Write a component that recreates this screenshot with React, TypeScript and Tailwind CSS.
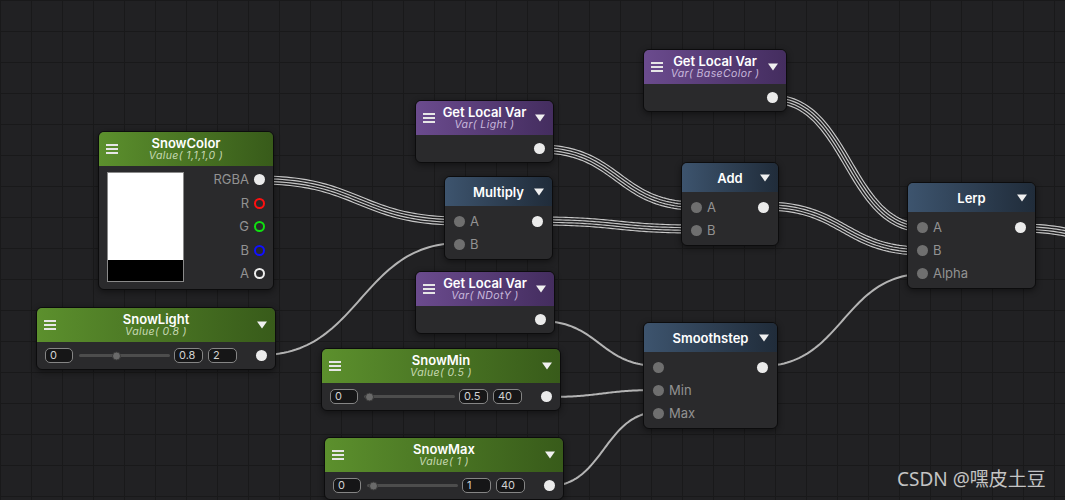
import React from "react";

type P = [number, number];

function wire(a: P, b: P, offs: number[]): string[] {
  const t = Math.max(Math.abs(b[0] - a[0]) * 0.5, 20);
  const p0 = a;
  const p1: P = [a[0] + t, a[1]];
  const p2: P = [b[0] - t, b[1]];
  const p3 = b;
  const N = 60;
  const pts: { x: number; y: number; nx: number; ny: number }[] = [];
  for (let i = 0; i <= N; i++) {
    const s = i / N;
    const u = 1 - s;
    const x = u * u * u * p0[0] + 3 * u * u * s * p1[0] + 3 * u * s * s * p2[0] + s * s * s * p3[0];
    const y = u * u * u * p0[1] + 3 * u * u * s * p1[1] + 3 * u * s * s * p2[1] + s * s * s * p3[1];
    const dx = 3 * u * u * (p1[0] - p0[0]) + 6 * u * s * (p2[0] - p1[0]) + 3 * s * s * (p3[0] - p2[0]);
    const dy = 3 * u * u * (p1[1] - p0[1]) + 6 * u * s * (p2[1] - p1[1]) + 3 * s * s * (p3[1] - p2[1]);
    const l = Math.hypot(dx, dy) || 1;
    pts.push({ x, y, nx: -dy / l, ny: dx / l });
  }
  return offs.map((o) =>
    pts
      .map((p, i) => `${i ? "L" : "M"}${(p.x + p.nx * o).toFixed(2)} ${(p.y + p.ny * o).toFixed(2)}`)
      .join(" ")
  );
}

const MULTI = [-4, -1.33, 1.33, 4];

const WIRES: { a: P; b: P; multi: boolean }[] = [
  { a: [259, 180], b: [460, 221], multi: true },
  { a: [261, 355], b: [460, 243], multi: false },
  { a: [540, 149], b: [696, 206], multi: true },
  { a: [538, 221], b: [696, 229], multi: true },
  { a: [772, 99], b: [924, 228], multi: true },
  { a: [764, 206], b: [924, 251], multi: true },
  { a: [540, 321], b: [659, 366], multi: false },
  { a: [546, 397], b: [659, 390], multi: false },
  { a: [549, 486], b: [659, 412], multi: false },
  { a: [762, 366], b: [924, 274], multi: false },
  { a: [1019, 228], b: [1170, 252], multi: true },
];

function Wires() {
  return (
    <svg className="absolute left-0 top-0" width={1065} height={500}>
      {WIRES.map((w, i) =>
        wire(w.a, w.b, w.multi ? MULTI : [0]).map((d, j) => (
          <path
            key={`${i}-${j}`}
            d={d}
            fill="none"
            stroke={w.multi ? "#c8c8c8" : "#b4b4b4"}
            strokeWidth={w.multi ? 1.15 : 2}
            strokeLinecap="round"
          />
        ))
      )}
    </svg>
  );
}

function Menu() {
  return (
    <div className="absolute left-[7px] top-1/2 flex -translate-y-1/2 flex-col gap-[2px]">
      <div className="h-[2px] w-[12px] bg-[#e6e6e6]" />
      <div className="h-[2px] w-[12px] bg-[#e6e6e6]" />
      <div className="h-[2px] w-[12px] bg-[#e6e6e6]" />
    </div>
  );
}

function Arrow() {
  return (
    <div className="absolute right-[8px] top-1/2 h-0 w-0 -translate-y-1/2 border-l-[5px] border-r-[5px] border-t-[7px] border-l-transparent border-r-transparent border-t-[#f0f0f0]" />
  );
}

function InDot() {
  return <div className="h-[11px] w-[11px] shrink-0 rounded-full bg-[#6f6f6f]" />;
}
function OutDot() {
  return <div className="h-[11px] w-[11px] shrink-0 rounded-full bg-[#ebebeb]" />;
}

type Head = "green" | "purple" | "blue";

function Node({
  pos,
  head,
  title,
  sub,
  menu,
  arrow,
  children,
}: {
  pos: string;
  head: Head;
  title: string;
  sub?: string;
  menu?: boolean;
  arrow?: boolean;
  children?: React.ReactNode;
}) {
  const headCls =
    head === "green"
      ? "bg-linear-to-r from-[#5c902d] to-[#385b1a]"
      : head === "purple"
      ? "bg-linear-to-r from-[#6b4b8e] to-[#442d5f]"
      : "bg-linear-to-r from-[#3d546e] to-[#202c3a]";
  const subCls = head === "green" ? "text-[#c6d8b2]" : "text-[#c8b8dc]";
  return (
    <div
      className={`absolute ${pos} overflow-hidden rounded-[6px] border border-[#0c0c0d] bg-[#2a2a2c] shadow-[0_2px_6px_rgba(0,0,0,0.45)]`}
    >
      <div
        className={`relative flex flex-col items-center justify-center ${sub ? "h-[34px]" : "h-[29px]"} ${headCls}`}
      >
        {menu && <Menu />}
        <div className="text-[13px] font-semibold leading-[14px] text-white">{title}</div>
        {sub && (
          <div className={`text-[10.5px] italic leading-[12px] tracking-[0.4px] ${subCls}`}>{sub}</div>
        )}
        {arrow && <Arrow />}
      </div>
      {children}
    </div>
  );
}

function OpBody({ rows }: { rows: { label?: string; inp?: boolean; out?: boolean }[] }) {
  return (
    <div className="flex flex-col px-[9px] pb-[3px] pt-[4px]">
      {rows.map((r, i) => (
        <div key={i} className="flex h-[23px] items-center">
          {r.inp && <InDot />}
          {r.label && <span className="ml-[5px] text-[13px] leading-none text-[#929292]">{r.label}</span>}
          <div className="flex-1" />
          {r.out && <OutDot />}
        </div>
      ))}
    </div>
  );
}

function VarBody() {
  return (
    <div className="flex h-[27px] items-center justify-end pr-[8px]">
      <OutDot />
    </div>
  );
}

function Box({ v, w }: { v: string; w: string }) {
  return (
    <div
      className={`flex h-[15px] ${w} items-center rounded-[5px] border-[1.5px] border-[#858585] bg-[#161617] pl-[4px] text-[11px] leading-none text-[#d2d2d2]`}
    >
      {v}
    </div>
  );
}

function SliderBody({ min, val, max, frac }: { min: string; val: string; max: string; frac: number }) {
  return (
    <div className="flex h-[27px] items-center pl-[8px] pr-[8px]">
      <Box v={min} w="w-[28px]" />
      <div className="relative ml-[6px] flex h-[15px] w-[91px] items-center">
        <div className="h-[3px] w-full rounded-full bg-[#4d4d4d]" />
        <div
          className="absolute top-1/2 h-[9px] w-[9px] -translate-y-1/2 rounded-full border border-[#3a3a3a] bg-[#6a6a6a]"
          style={{ left: `${frac * 82}px` }}
        />
      </div>
      <div className="ml-[4px]">
        <Box v={val} w="w-[29px]" />
      </div>
      <div className="ml-[5px]">
        <Box v={max} w="w-[29px]" />
      </div>
      <div className="flex-1" />
      <OutDot />
    </div>
  );
}

function Ring({ c }: { c: string }) {
  return <div className={`h-[11px] w-[11px] shrink-0 rounded-full border-[2px] ${c}`} />;
}

function ColorBody() {
  const rows: { l: string; dot: React.ReactNode }[] = [
    { l: "RGBA", dot: <OutDot /> },
    { l: "R", dot: <Ring c="border-[#ff1010]" /> },
    { l: "G", dot: <Ring c="border-[#10e010]" /> },
    { l: "B", dot: <Ring c="border-[#1010ff]" /> },
    { l: "A", dot: <Ring c="border-[#eeeeee]" /> },
  ];
  return (
    <div className="flex px-[8px] pb-[3px] pt-[6px]">
      <div className="flex h-[110px] w-[77px] flex-col border border-[#8a8a8a]">
        <div className="flex-1 bg-white" />
        <div className="h-[21px] bg-black" />
      </div>
      <div className="-mt-[4px] flex flex-1 flex-col items-end">
        {rows.map((r) => (
          <div key={r.l} className="flex h-[23.5px] items-center gap-[5px]">
            <span className="text-[13px] leading-none text-[#929292]">{r.l}</span>
            {r.dot}
          </div>
        ))}
      </div>
    </div>
  );
}

export default function App() {
  return (
    <div
      className="relative h-[500px] w-[1065px] overflow-hidden bg-[#212123] bg-[linear-gradient(to_right,#19191a_1px,transparent_1px),linear-gradient(to_bottom,#19191a_1px,transparent_1px)] bg-[size:31px_31px] font-['Inter','Noto_Sans',sans-serif]"
    >
      <Wires />

      <Node pos="left-[98px] top-[131px] w-[176px]" head="green" title="SnowColor" sub="Value( 1,1,1,0 )" menu>
        <ColorBody />
      </Node>

      <Node pos="left-[36px] top-[307px] w-[240px]" head="green" title="SnowLight" sub="Value( 0.8 )" menu arrow>
        <SliderBody min="0" val="0.8" max="2" frac={0.4} />
      </Node>

      <Node pos="left-[415px] top-[100px] w-[139px]" head="purple" title="Get Local Var" sub="Var( Light )" menu arrow>
        <VarBody />
      </Node>

      <Node pos="left-[643px] top-[49px] w-[144px]" head="purple" title="Get Local Var" sub="Var( BaseColor )" menu arrow>
        <VarBody />
      </Node>

      <Node pos="left-[444px] top-[176px] w-[109px]" head="blue" title="Multiply" arrow>
        <OpBody rows={[{ label: "A", inp: true, out: true }, { label: "B", inp: true }]} />
      </Node>

      <Node pos="left-[681px] top-[162px] w-[98px]" head="blue" title="Add" arrow>
        <OpBody rows={[{ label: "A", inp: true, out: true }, { label: "B", inp: true }]} />
      </Node>

      <Node pos="left-[907px] top-[182px] w-[129px]" head="blue" title="Lerp" arrow>
        <OpBody
          rows={[
            { label: "A", inp: true, out: true },
            { label: "B", inp: true },
            { label: "Alpha", inp: true },
          ]}
        />
      </Node>

      <Node pos="left-[415px] top-[271px] w-[140px]" head="purple" title="Get Local Var" sub="Var( NDotY )" menu arrow>
        <VarBody />
      </Node>

      <Node pos="left-[321px] top-[348px] w-[240px]" head="green" title="SnowMin" sub="Value( 0.5 )" menu arrow>
        <SliderBody min="0" val="0.5" max="40" frac={0.0125} />
      </Node>

      <Node pos="left-[643px] top-[322px] w-[135px]" head="blue" title="Smoothstep" arrow>
        <OpBody
          rows={[
            { inp: true, out: true },
            { label: "Min", inp: true },
            { label: "Max", inp: true },
          ]}
        />
      </Node>

      <Node pos="left-[324px] top-[437px] w-[240px]" head="green" title="SnowMax" sub="Value( 1 )" menu arrow>
        <SliderBody min="0" val="1" max="40" frac={0.025} />
      </Node>

      <div className="absolute left-[897px] top-[467px] font-['Noto_Sans','Noto_Sans_CJK_SC',sans-serif] text-[19px] leading-[24px] text-[#c4c4c4]">
        CSDN @嘿皮土豆
      </div>
    </div>
  );
}
